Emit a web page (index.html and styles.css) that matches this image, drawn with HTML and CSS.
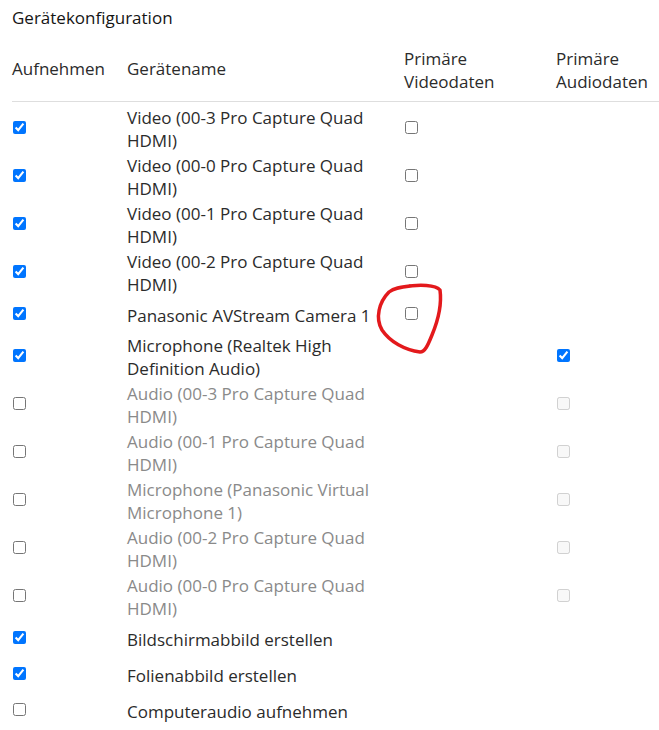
FILE: index.html
```html
<!DOCTYPE html>
<html lang="de">
<head>
<meta charset="utf-8">
<title>Gerätekonfiguration</title>
<link rel="stylesheet" href="styles.css">
</head>
<body>
<div class="page">
  <h2 class="title">Gerätekonfiguration</h2>
  <div class="table">
    <div class="row head">
      <div class="cell">Aufnehmen</div>
      <div class="cell">Gerätename</div>
      <div class="cell">Primäre<br>Videodaten</div>
      <div class="cell">Primäre<br>Audiodaten</div>
    </div>
    <div class="tbody">
      <div class="row">
        <div class="cell"><input type="checkbox" checked></div>
        <div class="cell name">Video (00-3 Pro Capture Quad HDMI)</div>
        <div class="cell"><input type="checkbox"></div>
        <div class="cell"></div>
      </div>
      <div class="row">
        <div class="cell"><input type="checkbox" checked></div>
        <div class="cell name">Video (00-0 Pro Capture Quad HDMI)</div>
        <div class="cell"><input type="checkbox"></div>
        <div class="cell"></div>
      </div>
      <div class="row">
        <div class="cell"><input type="checkbox" checked></div>
        <div class="cell name">Video (00-1 Pro Capture Quad HDMI)</div>
        <div class="cell"><input type="checkbox"></div>
        <div class="cell"></div>
      </div>
      <div class="row">
        <div class="cell"><input type="checkbox" checked></div>
        <div class="cell name">Video (00-2 Pro Capture Quad HDMI)</div>
        <div class="cell"><input type="checkbox"></div>
        <div class="cell"></div>
      </div>
      <div class="row">
        <div class="cell"><input type="checkbox" checked></div>
        <div class="cell name">Panasonic AVStream Camera 1</div>
        <div class="cell"><input type="checkbox"></div>
        <div class="cell"></div>
      </div>
      <div class="row">
        <div class="cell"><input type="checkbox" checked></div>
        <div class="cell name">Microphone (Realtek High Definition Audio)</div>
        <div class="cell"></div>
        <div class="cell"><input type="checkbox" checked></div>
      </div>
      <div class="row off">
        <div class="cell"><input type="checkbox"></div>
        <div class="cell name">Audio (00-3 Pro Capture Quad HDMI)</div>
        <div class="cell"></div>
        <div class="cell"><input type="checkbox" disabled></div>
      </div>
      <div class="row off">
        <div class="cell"><input type="checkbox"></div>
        <div class="cell name">Audio (00-1 Pro Capture Quad HDMI)</div>
        <div class="cell"></div>
        <div class="cell"><input type="checkbox" disabled></div>
      </div>
      <div class="row off">
        <div class="cell"><input type="checkbox"></div>
        <div class="cell name">Microphone (Panasonic Virtual Microphone 1)</div>
        <div class="cell"></div>
        <div class="cell"><input type="checkbox" disabled></div>
      </div>
      <div class="row off">
        <div class="cell"><input type="checkbox"></div>
        <div class="cell name">Audio (00-2 Pro Capture Quad HDMI)</div>
        <div class="cell"></div>
        <div class="cell"><input type="checkbox" disabled></div>
      </div>
      <div class="row off">
        <div class="cell"><input type="checkbox"></div>
        <div class="cell name">Audio (00-0 Pro Capture Quad HDMI)</div>
        <div class="cell"></div>
        <div class="cell"><input type="checkbox" disabled></div>
      </div>
      <div class="row">
        <div class="cell"><input type="checkbox" checked></div>
        <div class="cell name">Bildschirmabbild erstellen</div>
        <div class="cell"></div>
        <div class="cell"></div>
      </div>
      <div class="row">
        <div class="cell"><input type="checkbox" checked></div>
        <div class="cell name">Folienabbild erstellen</div>
        <div class="cell"></div>
        <div class="cell"></div>
      </div>
      <div class="row">
        <div class="cell"><input type="checkbox"></div>
        <div class="cell name">Computeraudio aufnehmen</div>
        <div class="cell"></div>
        <div class="cell"></div>
      </div>
    </div>
  </div>
  <svg class="mark" width="659" height="730" viewBox="0 0 659 730" aria-hidden="true">
    <path d="M403 287 C420 284 436 285 440 290 C442 305 437 323 432 335 C428 345 425 352 420 352 C405 350 390 342 382 330 C375 318 379 302 389 292 C394 288 400 287 410 286" fill="none" stroke="#e3191c" stroke-width="3.5" stroke-linecap="round" stroke-linejoin="round"/>
  </svg>
</div>
</body>
</html>
```
FILE: styles.css
```css
html, body {
  margin: 0;
  padding: 0;
  background: #fff;
}
.page {
  position: relative;
  width: 659px;
  height: 730px;
  overflow: hidden;
  font-family: "Open Sans", "Noto Sans", sans-serif;
  font-size: 17px;
  line-height: 23px;
  color: #2b2b2b;
}
.title {
  margin: 6px 0 0 12px;
  font-size: 17px;
  font-weight: 400;
  line-height: 23px;
  color: #151515;
}
.table {
  margin: 10px 0 0 12px;
}
.row {
  display: grid;
  grid-template-columns: 115px 277px 152px 1fr;
  align-items: center;
  min-height: 36px;
}
.head {
  padding: 8px 0 8px;
  border-bottom: 1px solid #dedede;
  align-items: center;
}
.head .cell:first-child,
.head .cell:nth-child(2) {
  padding-bottom: 3px;
}
.tbody {
  padding-top: 3px;
}
.cell {
  display: flex;
  align-items: center;
}
.name {
  padding: 1px 20px 1px 0;
}
.cell input {
  margin: 0 0 3px 1px;
  width: 13px;
  height: 13px;
}
.off .name {
  color: #8a8a8a;
}
.mark {
  position: absolute;
  left: 0;
  top: 0;
  pointer-events: none;
}
```
